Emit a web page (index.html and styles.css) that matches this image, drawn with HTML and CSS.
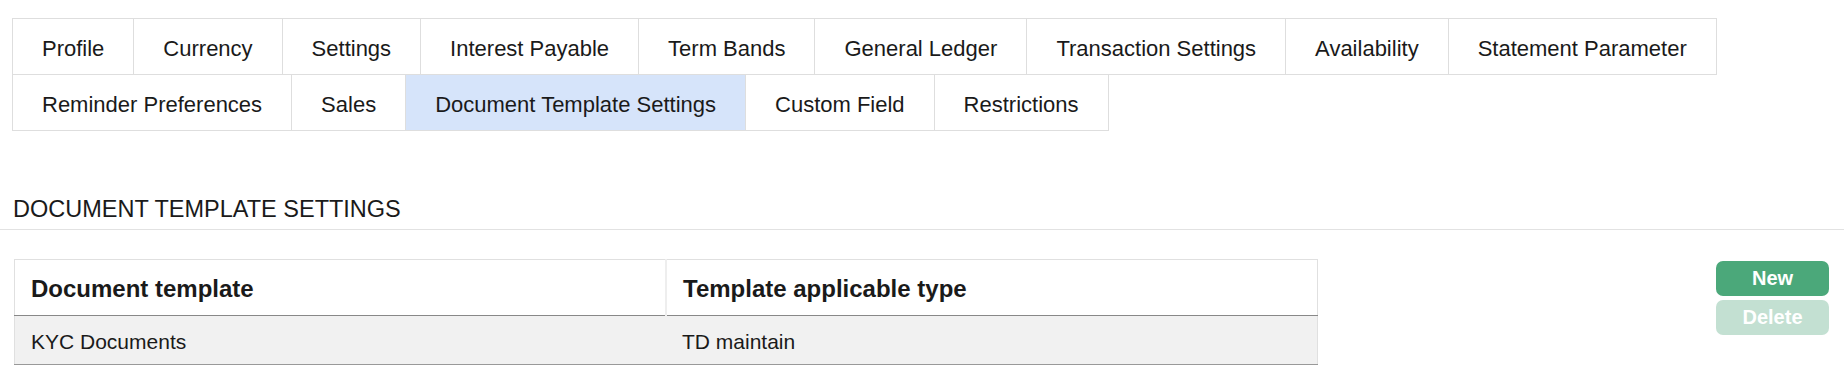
FILE: index.html
```html
<!DOCTYPE html>
<html lang="en">
<head>
    <meta charset="UTF-8">
    <meta name="viewport" content="width=device-width, initial-scale=1.0">
    <title>Document Template Settings</title>
    <link rel="stylesheet" href="styles.css">
</head>
<body>
    <div class="tabs">
        <div class="tab-row">
            <div class="tab">Profile</div>
            <div class="tab">Currency</div>
            <div class="tab">Settings</div>
            <div class="tab">Interest Payable</div>
            <div class="tab">Term Bands</div>
            <div class="tab">General Ledger</div>
            <div class="tab">Transaction Settings</div>
            <div class="tab">Availability</div>
            <div class="tab">Statement Parameter</div>
        </div>
        <div class="tab-row">
            <div class="tab">Reminder Preferences</div>
            <div class="tab">Sales</div>
            <div class="tab active">Document Template Settings</div>
            <div class="tab">Custom Field</div>
            <div class="tab">Restrictions</div>
        </div>
    </div>

    <div class="section-title">DOCUMENT TEMPLATE SETTINGS</div>

    <div class="content">
        <table class="grid">
            <thead>
                <tr>
                    <th class="col-name">Document template</th>
                    <th>Template applicable type</th>
                </tr>
            </thead>
            <tbody>
                <tr>
                    <td>KYC Documents</td>
                    <td>TD maintain</td>
                </tr>
            </tbody>
        </table>
        <div class="actions">
            <button class="btn">New</button>
            <button class="btn disabled">Delete</button>
        </div>
    </div>
</body>
</html>
```

FILE: styles.css
```css
body {
    margin: 0;
    padding-top: 19px;
    font-family: "Liberation Sans", Arial, sans-serif;
    color: #1a1a1a;
    background-color: #fff;
}

.tabs {
    padding-left: 12px;
}

.tab-row {
    display: flex;
}

.tab {
    padding: 17px 29px 13px;
    line-height: 25px;
    font-size: 22px;
    border: 1px solid #dedede;
    margin-left: -1px;
    margin-top: -1px;
    background-color: #fff;
    white-space: nowrap;
}

.tab-row .tab:first-child {
    margin-left: 0;
}

.tab.active {
    background-color: #d6e4fa;
}

.section-title {
    margin-top: 64px;
    padding: 0 0 6px 13px;
    font-size: 23.5px;
    line-height: 28px;
    border-bottom: 1px solid #e2e2e2;
}

.content {
    display: flex;
    justify-content: space-between;
    align-items: flex-start;
    padding: 29px 15px 0 14px;
}

.grid {
    width: 1304px;
    border-collapse: collapse;
    border: 1px solid #e0e0e0;
}

.grid th {
    text-align: left;
    font-size: 24px;
    line-height: 28px;
    font-weight: bold;
    padding: 15px 16px 12px;
    border-bottom: 1px solid #888;
    border-left: 2px solid #eee;
    background-color: #fff;
}

.grid th.col-name {
    width: 50%;
    border-left: none;
}

.grid td {
    font-size: 21px;
    line-height: 25px;
    padding: 13px 16px 10px;
    background-color: #f1f1f1;
    border-bottom: 1px solid #999;
}

.actions {
    display: flex;
    flex-direction: column;
    gap: 4px;
    padding-top: 2px;
}

.btn {
    width: 113px;
    height: 35px;
    border: none;
    border-radius: 7px;
    background-color: #4ba87a;
    color: #fff;
    font-family: "Liberation Sans", Arial, sans-serif;
    font-size: 20px;
    font-weight: bold;
    cursor: pointer;
}

.btn.disabled {
    background-color: #c3e0d2;
    cursor: default;
}
```
